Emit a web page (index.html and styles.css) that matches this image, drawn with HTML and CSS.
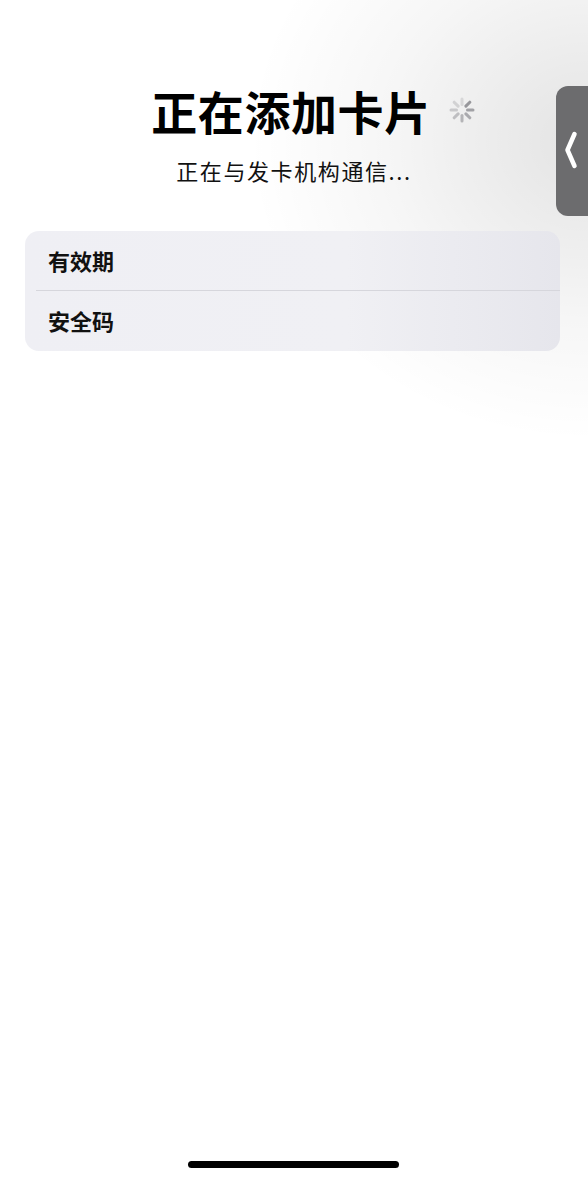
FILE: index.html
```html
<!DOCTYPE html>
<html lang="zh-CN">
<head>
    <meta charset="UTF-8">
    <meta name="viewport" content="width=device-width, initial-scale=1.0">
    <title>正在添加卡片</title>
    <link rel="stylesheet" href="styles.css">
</head>
<body>
    <div class="screen">
        <div class="header">
            <h1 class="title">正在添加卡片
                <svg class="spinner" width="28" height="28" viewBox="0 0 28 28">
                    <g stroke-linecap="round" stroke-width="3" stroke="#8e8e93">
                        <line x1="14" y1="3" x2="14" y2="8.5" opacity="0.25"/>
                        <line x1="21.8" y1="6.2" x2="17.9" y2="10.1" opacity="0.9"/>
                        <line x1="25" y1="14" x2="19.5" y2="14" opacity="0.8"/>
                        <line x1="21.8" y1="21.8" x2="17.9" y2="17.9" opacity="0.7"/>
                        <line x1="14" y1="25" x2="14" y2="19.5" opacity="0.6"/>
                        <line x1="6.2" y1="21.8" x2="10.1" y2="17.9" opacity="0.5"/>
                        <line x1="3" y1="14" x2="8.5" y2="14" opacity="0.4"/>
                        <line x1="6.2" y1="6.2" x2="10.1" y2="10.1" opacity="0.3"/>
                    </g>
                </svg>
            </h1>
            <p class="subtitle">正在与发卡机构通信...</p>
        </div>

        <div class="form-group">
            <div class="form-row">有效期</div>
            <div class="form-row">安全码</div>
        </div>

        <div class="side-tab">
            <svg width="14" height="38" viewBox="0 0 14 38">
                <path d="M10.5 3 L3.5 19 L10.5 35" fill="none" stroke="#fff" stroke-width="4.5" stroke-linecap="round" stroke-linejoin="round"/>
            </svg>
        </div>

        <div class="home-indicator"></div>
    </div>
</body>
</html>
```

FILE: styles.css
```css
html, body {
    margin: 0;
    padding: 0;
}
body {
    font-family: "Noto Sans CJK SC", "Noto Sans", sans-serif;
    background: #fff;
    color: #000;
}
.screen {
    position: relative;
    width: 588px;
    height: 1179px;
    overflow: hidden;
    background:
        radial-gradient(ellipse 340px 300px at 100% 12%, rgba(0,0,0,0.11), rgba(0,0,0,0.035) 60%, rgba(0,0,0,0) 100%),
        #fff;
}
.header {
    padding-top: 80px;
    text-align: center;
}
.title {
    position: relative;
    display: inline-block;
    margin: 0 0 0 -6px;
    font-size: 46px;
    font-weight: 700;
    line-height: 60px;
    letter-spacing: 0.6px;
}
.spinner {
    position: absolute;
    left: 100%;
    top: 16px;
    margin-left: 17px;
}
.subtitle {
    margin: 15px 0 0 0;
    font-size: 22px;
    line-height: 30px;
    font-weight: 400;
    letter-spacing: 1.6px;
    color: #111;
}
.form-group {
    margin: 46px 28px 0 25px;
    border-radius: 14px;
    background: linear-gradient(90deg, #efeff4 0%, #f0f0f4 60%, #e6e6ec 100%);
    padding-left: 11px;
}
.form-row {
    height: 59px;
    line-height: 59px;
    padding-left: 12px;
    font-size: 22px;
    font-weight: 700;
    color: #111;
    border-bottom: 1px solid #d6d6dc;
}
.form-row:last-child {
    border-bottom: none;
    height: 60px;
}
.side-tab {
    position: absolute;
    right: 0;
    top: 86px;
    width: 32px;
    height: 130px;
    background: #6c6c6e;
    border-radius: 12px 0 0 12px;
    display: flex;
    align-items: center;
    padding-left: 8px;
    padding-bottom: 2px;
    box-sizing: border-box;
}
.home-indicator {
    position: absolute;
    left: 188px;
    top: 1161px;
    width: 211px;
    height: 7px;
    border-radius: 4px;
    background: #000;
}
```
